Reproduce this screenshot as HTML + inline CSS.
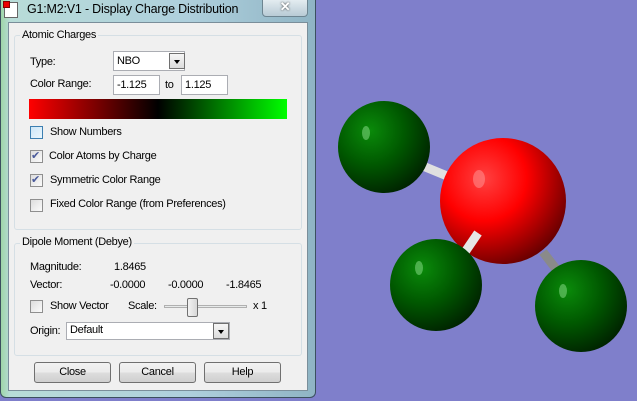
<!DOCTYPE html><html><head><style>
*{margin:0;padding:0;box-sizing:border-box}
body{width:637px;height:401px;background:#7f7fcb;position:relative;overflow:hidden;font-family:"Liberation Sans",sans-serif;font-size:11px;letter-spacing:-0.3px;color:#000}
.a{position:absolute}
.frame{left:0;top:0;width:316px;height:398px;background:linear-gradient(90deg,#9fd6a8 0,#b8dcd8 3%,#aecfdc 60%,#8fb4c4 100%);border:1px solid #3b4f5e;border-top:none;border-radius:0 0 6px 6px}
.client{left:8px;top:22px;width:300px;height:369px;background:#f0f0f0;border:1px solid #7a8e9a}
.grp{border:1px solid #d5dfe5;border-radius:3px}
.lbl{background:#f0f0f0;padding:0 2px}
.inp{background:#fff;border:1px solid #abadb3;padding:3px 3px 0;height:20px}
.cb{width:13px;height:13px;border:1px solid #8f8f8f;background:linear-gradient(135deg,#ddd,#fbfbfb)}
.btn{border:1px solid #707070;border-radius:3px;background:linear-gradient(#f2f2f2 0,#ebebeb 50%,#dddddd 51%,#cfcfcf 100%);text-align:center;line-height:19px;height:21px;width:77px}
.dd{width:16px;height:16px;border:1px solid #707070;background:linear-gradient(#f6f6f6,#dcdcdc)}
.dd:after{content:"";position:absolute;left:4px;top:6px;border:3.5px solid transparent;border-top:4px solid #000}
</style></head><body>
<div class="a frame"></div>
<div class="a" style="left:4px;top:2px;width:14px;height:16px;background:#fff;border:1px solid #666"></div>
<div class="a" style="left:3px;top:1px;width:7px;height:7px;background:#e00;border:1px solid #800"></div>
<div class="a" style="left:27px;top:2px;font-size:12.5px;letter-spacing:-0.2px">G1:M2:V1 - Display Charge Distribution</div>
<div class="a" style="left:262px;top:-2px;width:46px;height:19px;border:1px solid #6d8591;border-radius:0 0 4px 4px;background:linear-gradient(#e6eef2,#b8cbd5);text-align:center;color:#fff;font-weight:bold;font-size:13px;text-shadow:0 0 2px #333">✕</div>
<div class="a client"></div>
<div class="a grp" style="left:14px;top:35px;width:288px;height:195px"></div>
<div class="a lbl" style="left:20px;top:29px">Atomic Charges</div>
<div class="a" style="left:30px;top:56px">Type:</div>
<div class="a inp" style="left:113px;top:51px;width:72px">NBO</div>
<div class="a dd" style="left:169px;top:53px"></div>
<div class="a" style="left:30px;top:78px">Color Range:</div>
<div class="a inp" style="left:113px;top:75px;width:47px">-1.125</div>
<div class="a" style="left:165px;top:79px">to</div>
<div class="a inp" style="left:181px;top:75px;width:47px">1.125</div>
<div class="a" style="left:29px;top:99px;width:258px;height:20px;background:linear-gradient(90deg,#f00,#000 50%,#0f0)"></div>
<div class="a cb" style="left:30px;top:126px;border-color:#3c7fb1;background:linear-gradient(135deg,#cde6f7,#eaf6fd)"></div><div class="a" style="left:50px;top:126px">Show Numbers</div>
<div class="a cb" style="left:30px;top:150px;color:#4a5a9a;font-size:11px;line-height:11px">✔</div><div class="a" style="left:49px;top:150px">Color Atoms by Charge</div>
<div class="a cb" style="left:30px;top:174px;color:#4a5a9a;font-size:11px;line-height:11px">✔</div><div class="a" style="left:50px;top:174px">Symmetric Color Range</div>
<div class="a cb" style="left:30px;top:199px"></div><div class="a" style="left:50px;top:198px">Fixed Color Range (from Preferences)</div>
<div class="a grp" style="left:14px;top:243px;width:288px;height:113px"></div>
<div class="a lbl" style="left:20px;top:236px">Dipole Moment (Debye)</div>
<div class="a" style="left:30px;top:261px">Magnitude:</div>
<div class="a" style="left:114px;top:261px">1.8465</div>
<div class="a" style="left:30px;top:279px">Vector:</div>
<div class="a" style="left:110px;top:279px">-0.0000</div>
<div class="a" style="left:168px;top:279px">-0.0000</div>
<div class="a" style="left:226px;top:279px">-1.8465</div>
<div class="a cb" style="left:30px;top:300px"></div><div class="a" style="left:50px;top:300px">Show Vector</div>
<div class="a" style="left:128px;top:300px">Scale:</div>
<div class="a" style="left:164px;top:305px;width:83px;height:3px;border:1px solid #b0b0b0;background:#e7eaea"></div>
<div class="a" style="left:187px;top:298px;width:11px;height:19px;border:1px solid #707070;border-radius:2px;background:linear-gradient(90deg,#f2f2f2,#d8d8d8)"></div>
<div class="a" style="left:253px;top:300px">x 1</div>
<div class="a" style="left:30px;top:325px">Origin:</div>
<div class="a inp" style="left:66px;top:322px;width:164px;height:18px;padding-top:1px">Default</div>
<div class="a dd" style="left:213px;top:323px"></div>
<div class="a btn" style="left:34px;top:362px">Close</div>
<div class="a btn" style="left:119px;top:362px">Cancel</div>
<div class="a btn" style="left:204px;top:362px">Help</div>
<svg class="a" style="left:0;top:0" width="637" height="401">
<defs>
<radialGradient id="g" cx="0.35" cy="0.32" r="0.75"><stop offset="0" stop-color="#0a8a0a"/><stop offset="0.5" stop-color="#005800"/><stop offset="1" stop-color="#002000"/></radialGradient>
<radialGradient id="r" cx="0.35" cy="0.32" r="0.75"><stop offset="0" stop-color="#ff4040"/><stop offset="0.45" stop-color="#ff0000"/><stop offset="1" stop-color="#600000"/></radialGradient>
</defs>
<line x1="418" y1="164" x2="452" y2="178" stroke="#e0e0e0" stroke-width="9"/>
<line x1="543" y1="252" x2="563" y2="278" stroke="#8a8a8a" stroke-width="9"/>
<circle cx="384" cy="147" r="46" fill="url(#g)"/>
<circle cx="503" cy="201" r="63" fill="url(#r)"/>
<line x1="478" y1="233" x2="463" y2="255" stroke="#e6e6e6" stroke-width="9"/>
<circle cx="436" cy="285" r="46" fill="url(#g)"/>
<circle cx="581" cy="306" r="46" fill="url(#g)"/>
<ellipse cx="366" cy="133" rx="4" ry="7" fill="#8fe08f" opacity="0.5"/>
<ellipse cx="419" cy="268" rx="4" ry="7" fill="#8fe08f" opacity="0.5"/>
<ellipse cx="563" cy="291" rx="4" ry="7" fill="#8fe08f" opacity="0.5"/>
<ellipse cx="479" cy="179" rx="6" ry="9" fill="#ff9a9a" opacity="0.5"/>
</svg>
</body></html>
